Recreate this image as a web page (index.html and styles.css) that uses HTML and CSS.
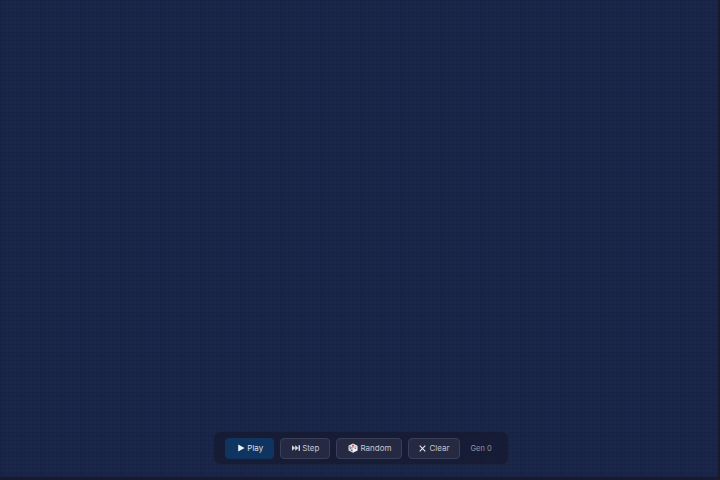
FILE: index.html
```html
<!DOCTYPE html>
<html lang="en">
<head>
<meta charset="utf-8">
<title>Game of Life</title>
<link rel="stylesheet" href="styles.css">
</head>
<body>
<main class="stage">
  <div class="toolbar">
    <button class="btn btn-primary"><svg class="icon" viewBox="0 0 10 10"><path d="M1.5 .5 L9.5 5 L1.5 9.5 Z" fill="#e8f2fa"/></svg>Play</button>
    <button class="btn"><svg class="icon" viewBox="0 0 10 10"><path d="M0 1.5 L4 5 L0 8.5 Z M4 1.5 L8 5 L4 8.5 Z" fill="#d4d6e0"/><rect x="8.2" y="1.5" width="1.8" height="7" fill="#d4d6e0"/></svg>Step</button>
    <button class="btn"><svg class="icon icon-die" viewBox="0 0 12 12"><path d="M6 .5 L11.5 3.2 L6 6 L.5 3.2 Z" fill="#e7dfe2"/><path d="M.5 3.2 L6 6 L6 11.7 L.5 8.9 Z" fill="#c9ccd4"/><path d="M11.5 3.2 L6 6 L6 11.7 L11.5 8.9 Z" fill="#f0f0f3"/><circle cx="6" cy="3.2" r="1.2" fill="#c8434f"/><circle cx="3" cy="6" r=".9" fill="#5d5f70"/><circle cx="4.5" cy="8.6" r=".9" fill="#5d5f70"/><circle cx="8.8" cy="6.4" r=".9" fill="#c8434f"/></svg>Random</button>
    <button class="btn btn-clear"><svg class="icon icon-x" viewBox="0 0 10 10"><path d="M1 1 L9 9 M9 1 L1 9" stroke="#e4e5ec" stroke-width="1.6" fill="none"/></svg>Clear</button>
    <span class="gen">Gen 0</span>
  </div>
</main>
</body>
</html>
```

FILE: styles.css
```css
* { box-sizing: border-box; }
html, body { margin: 0; height: 100%; }
body {
  background: #1a1a2e;
  font-family: Inter, "Liberation Sans", sans-serif;
  overflow: hidden;
}
.stage {
  width: 718px;
  height: 477px;
  background-color: #1a274b;
  background-image:
    repeating-linear-gradient(90deg, rgba(10,16,40,.1) 0 1px, transparent 1px 4px),
    repeating-linear-gradient(0deg, rgba(10,16,40,.1) 0 1px, transparent 1px 4px),
    repeating-linear-gradient(90deg, rgba(10,16,40,.06) 0 4px, transparent 4px 20px),
    repeating-linear-gradient(0deg, rgba(10,16,40,.06) 0 4px, transparent 4px 20px);
  display: flex;
  align-items: flex-end;
  justify-content: center;
  padding: 0 0 12px 2px;
}
.toolbar {
  display: flex;
  align-items: center;
  gap: 6px;
  height: 34px;
  padding: 0 16px 0 11px;
  background: rgba(22, 26, 50, .8);
  border: 1px solid rgba(255,255,255,.03);
  border-radius: 8px;
  transform: translateX(1px);
}
.btn {
  display: flex;
  align-items: center;
  justify-content: center;
  gap: 2px;
  height: 21px;
  padding: 0 10px 0 11px;
  font: 400 8px Inter, "Liberation Sans", sans-serif;
  color: #c4c6d2;
  background: #252a42;
  border: 1px solid #3a3f58;
  border-radius: 4px;
}
.btn-primary {
  color: #d6e2ef;
  background: #0f3460;
  border-color: #0f3460;
}
.btn-clear {
  gap: 3px;
  padding: 0 10px;
}
.icon { width: 8px; height: 8px; }
.icon-die { width: 10px; height: 10px; }
.icon-x { width: 7px; height: 7px; }
.gen {
  margin-left: 4px;
  font-size: 7.5px;
  color: #9496a6;
}
```
